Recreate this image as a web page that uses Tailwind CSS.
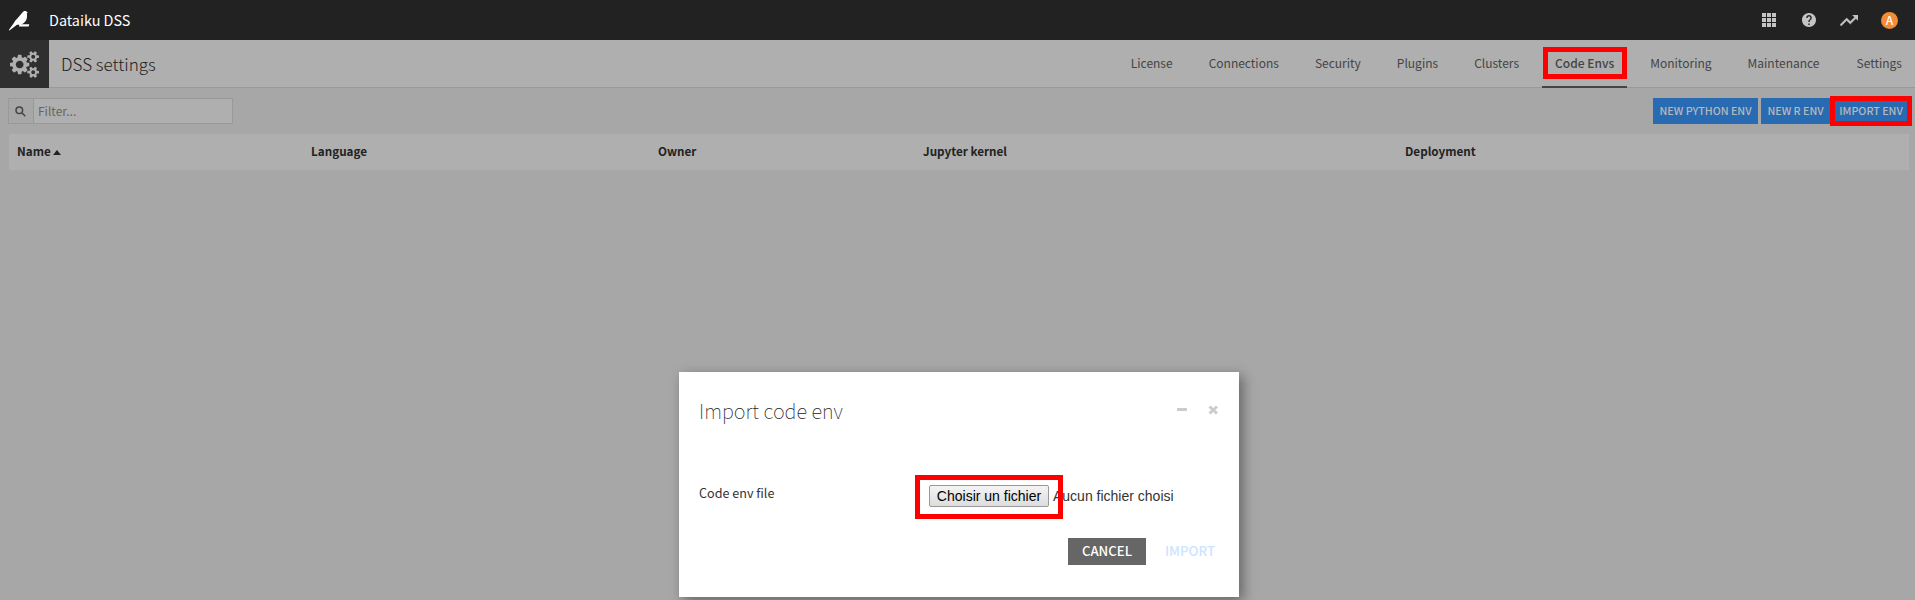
<!DOCTYPE html>
<html lang="en"><head><meta charset="utf-8"><title>Dataiku DSS</title>
<script src="https://cdn.jsdelivr.net/npm/@tailwindcss/browser@4"></script></head>
<body class="h-[600px] w-[1915px] overflow-hidden bg-[#a7a7a7] font-['Noto_Sans_CJK_SC',sans-serif] text-[#333]">
<header class="flex h-10 items-center bg-[#222] text-white">
  <svg class="h-10 w-8" viewBox="0 0 32 40" fill="#fff"><path d="M8.800 30 13.500 23.500C15.500 19.500 20 16 22 13c1-1.500 1.800-2.100 3-2.100s1.700.6 2.800 1.700l-1 .6c.8 4.300-.3 8-3.600 10.200-1.800 1-4 1.200-6.200 1.300L9.400 30.500zM19.500 24.300H29.300L28.700 26.600H19z"/></svg>
  <div class="ml-[17px] text-[14.4px] leading-5">Dataiku DSS</div>
  <div class="ml-auto mr-[17px] flex items-center">
    <svg class="h-[14px] w-[14px]" viewBox="0 0 14 14" fill="#c4c4c4"><path d="M0 0h4v4H0zM5 0h4v4H5zM10 0h4v4h-4zM0 5h4v4H0zM5 5h4v4H5zM10 5h4v4h-4zM0 10h4v4H0zM5 10h4v4H5zM10 10h4v4h-4z"/></svg>
    <svg class="ml-[26px] h-[14px] w-[14px]" viewBox="2 2 20 20" fill="#c4c4c4"><path d="M12 2C6.480 2 2 6.480 2 12s4.480 10 10 10 10-4.480 10-10S17.520 2 12 2zm1 17h-2v-2h2v2zm2.070-7.750-.9.920C13.450 12.900 13 13.500 13 15h-2v-.5c0-1.100.450-2.100 1.170-2.830l1.240-1.260c.370-.360.590-.860.590-1.410 0-1.100-.9-2-2-2s-2 .9-2 2H8c0-2.210 1.790-4 4-4s4 1.790 4 4c0 .880-.360 1.680-.930 2.250z"/></svg>
    <svg class="ml-[24px] h-[11px] w-[18px]" viewBox="2 6 20 12" fill="#c4c4c4" stroke="#c4c4c4" stroke-width=".5"><path d="M16 6l2.290 2.290-4.880 4.880-4-4L2 16.590 3.410 18l6-6 4 4 6.300-6.290L22 12V6z"/></svg>
    <div class="ml-[23px] flex h-[17px] w-[17px] items-center justify-center rounded-full bg-[#f28c38] text-[12px] leading-none font-medium text-white">A</div>
  </div>
</header>
<nav class="flex h-12 border-b border-[#999] bg-[#afafaf]">
  <div class="flex h-12 w-[49px] items-center justify-center bg-[#2f2f2f]">
    <svg class="mr-px h-[27px] w-[29px]" viewBox="0 0 30 28" fill="#afafaf" preserveAspectRatio="none"><path d="M14 14c0-2.200-1.800-4-4-4s-4 1.800-4 4 1.800 4 4 4 4-1.800 4-4zm12 8c0-1.100-.9-2-2-2s-2 .9-2 2a2 2 0 1 0 4 0zm0-16c0-1.100-.9-2-2-2s-2 .9-2 2a2 2 0 1 0 4 0zM20 12.600v2.900c0 .2-.2.400-.4.400l-2.400.4c-.1.400-.3.800-.5 1.200.4.600.9 1.200 1.400 1.800.1.100.1.200.1.300 0 .4-2.300 2.700-2.700 2.700l-.3-.1-1.800-1.400c-.4.200-.8.300-1.200.5-.1.800-.1 1.600-.4 2.400 0 .2-.2.400-.4.400H8.600c-.2 0-.4-.2-.4-.4l-.4-2.400c-.4-.1-.8-.3-1.200-.5l-1.800 1.400c-.5.400-3-2.200-3-2.600 0-.3 1.300-1.800 1.500-2.100-.2-.4-.4-.8-.5-1.200l-2.400-.4c-.2 0-.4-.2-.4-.4v-2.900c0-.2.200-.4.400-.5l2.400-.3c.1-.4.300-.8.500-1.200-.5-.6-.9-1.200-1.400-1.800l-.1-.3c0-.4 2.300-2.700 2.700-2.700l.3.100 1.800 1.400c.4-.2.800-.4 1.200-.5.100-.8.100-1.600.4-2.400 0-.2.200-.4.400-.4h2.900c.2 0 .4.200.4.400l.4 2.400c.4.100.8.300 1.200.5l1.800-1.400c.5-.4 3 2.200 3 2.600 0 .3-1.300 1.800-1.500 2.100.2.400.4.800.5 1.200l2.400.4c.2 0 .3.200.3.300zM30 20.900v2.200c0 .2-2 .4-2.300.4l-.6 1c.1.200.8 1.800.8 2 0 .3-1.900 1.300-2 1.300-.2 0-1.300-1.400-1.500-1.700h-1c-.1.300-1.200 1.700-1.400 1.700-.1 0-2-1-2-1.300 0-.2.700-1.700.8-2l-.6-1c-.3 0-2.300-.2-2.300-.4v-2.200c0-.2 2-.4 2.300-.4l.6-1c-.1-.3-.8-1.800-.8-2 0-.2 1.900-1.200 2-1.200.2 0 1.300 1.300 1.500 1.600h1c.4-.5.800-1.100 1.300-1.600h.1c.1 0 2 1 2 1.200s-.7 1.700-.8 2l.6 1c.3 0 2.300.2 2.300.4zm0-16v2.200c0 .2-2 .4-2.300.4l-.6 1c.1.200.8 1.800.8 2 0 .3-1.900 1.300-2 1.300-.2 0-1.300-1.400-1.500-1.700h-1c-.1.300-1.200 1.700-1.400 1.700-.1 0-2-1-2-1.300 0-.2.700-1.700.8-2l-.6-1c-.3 0-2.300-.2-2.300-.4V4.900c0-.2 2-.4 2.300-.4l.6-1c-.1-.3-.8-1.800-.8-2 0-.2 1.900-1.200 2-1.200.2 0 1.300 1.300 1.500 1.600h1C24.800 1.400 25.200.8 25.700.3h.1c.1 0 2 1 2 1.200s-.7 1.700-.8 2l.6 1c.4 0 2.400.2 2.400.4z" fill-rule="evenodd"/></svg>
  </div>
  <h1 class="ml-3 text-[17.1px] leading-[48px] font-light text-[#222]">DSS settings</h1>
  <div class="ml-auto flex text-[12px] leading-[45px] text-[#444]">
    <span class="px-[18px]">License</span><span class="px-[18px]">Connections</span><span class="px-[18px]">Security</span><span class="px-[18px]">Plugins</span><span class="px-[18px]">Clusters</span>
    <span class="relative mx-[5px] h-12 border-b-2 border-[#444] px-[13px] font-medium">Code Envs<i class="absolute top-[7px] left-px h-8 w-[84px] border-5 border-[#f00]"></i></span>
    <span class="px-[18px]">Monitoring</span><span class="px-[18px]">Maintenance</span><span class="pr-[13px] pl-[19px]">Settings</span>
  </div>
</nav>
<section class="flex h-[46px] items-center pr-[6px] pl-2">
  <div class="flex h-[26px] w-[225px] border border-[#999] bg-[#afafaf] text-[12px] leading-[23px]">
    <span class="flex w-[25px] items-center justify-center border-r border-[#999] bg-[#a7a7a7]"><svg class="mr-px h-[11px] w-[11px]" viewBox="0 0 11 11" fill="none" stroke="#444" stroke-width="1.500"><circle cx="4.300" cy="4.300" r="3.300"/><path d="m6.800 6.800 3.500 3.500"/></svg></span>
    <span class="pl-1 text-[#666]">Filter...</span>
  </div>
  <div class="ml-auto flex gap-[3px] text-[10.7px] leading-[25px] font-medium text-[#b9b9b9]">
    <span class="h-[26px] w-[105px] bg-[#286bb2] text-center">NEW PYTHON ENV</span>
    <span class="h-[26px] w-[69px] bg-[#286bb2] text-center">NEW R ENV</span>
    <span class="relative h-[26px] w-[76px] bg-[#286bb2] text-center">IMPORT ENV<i class="absolute -top-0.5 -left-[3px] h-[30px] w-[82px] border-5 border-[#f00]"></i></span>
  </div>
</section>
<section class="mr-[6px] ml-[9px] flex h-9 bg-[#afafaf] text-[11.7px] leading-[34px] font-bold text-[#222]">
  <span class="flex w-[294px] pl-2">Name<svg class="mt-4 ml-[2px] h-[5px] w-2" viewBox="0 0 8 5" fill="#222"><path d="M0 5 4 0l4 5z"/></svg></span>
  <span class="w-[347px] pl-2">Language</span><span class="w-[265px] pl-2">Owner</span><span class="w-[482px] pl-2">Jupyter kernel</span><span class="pl-2">Deployment</span>
</section>
<div class="absolute top-[372px] left-[679px] h-[225px] w-[560px] bg-white shadow-[4px_4px_12px_rgba(0,0,0,0.4)]">
  <div class="flex h-[80px] px-5 pt-6"><h2 class="text-[20px] leading-[30px] font-thin text-[#222]">Import code env</h2>
  <svg class="mt-[9px] ml-auto h-3 w-[43px]" viewBox="0 0 43 12" fill="#ccc"><path d="M1 3h10v3H1z"/><path d="m33.500 1.500 7.500 7m0-7-7.500 7" stroke="#ccc" stroke-width="3"/></svg></div>
  <div class="flex h-[86px] px-5 pt-6"><span class="w-[230px] pt-[5px] text-[12.6px] leading-6">Code env file</span>
    <span class="relative mt-[9px] flex h-[22px] font-['Liberation_Sans',sans-serif] text-[14px] leading-5"><span class="w-[120px] rounded-xs border border-[#999] bg-linear-to-b from-[#f4f4f4] to-[#ddd] text-center text-black">Choisir un fichier</span><span class="pt-px pl-1">Aucun fichier choisi</span><i class="absolute -top-[10px] -left-[14px] h-11 w-[148px] border-5 border-[#f00]"></i></span></div>
  <div class="flex h-[27px] justify-end text-[13.2px] leading-[26px] font-medium"><span class="w-[78px] bg-[#666] text-center text-white">CANCEL</span><span class="mr-[24px] ml-[19px] text-[#cce4ff]">IMPORT</span></div>
</div>
</body></html>
